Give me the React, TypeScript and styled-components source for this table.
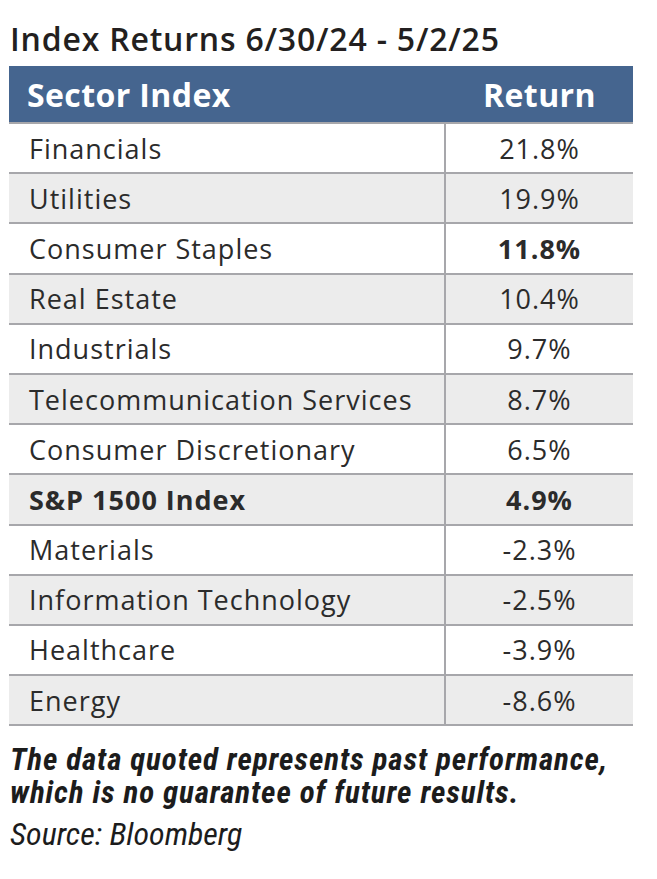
import React from "react";
import styled, { createGlobalStyle } from "styled-components";

const Global = createGlobalStyle`
  html, body { margin: 0; padding: 0; background: #ffffff; }
  body { font-family: "Open Sans", "Noto Sans", sans-serif; }
`;

const Page = styled.div`
  width: 657px;
  padding: 19px 24px 0 9px;
  box-sizing: border-box;
`;

const Title = styled.h1`
  margin: 0 0 8px 1px;
  font-size: 32px;
  font-weight: 600;
  line-height: 39px;
  color: #231f20;
  letter-spacing: 0.8px;
`;

const Table = styled.div`
  width: 624px;
  display: flex;
  flex-direction: column;
`;

const HeaderRow = styled.div`
  display: grid;
  grid-template-columns: 437px 1fr;
  height: 56px;
  align-items: center;
  background: #45658f;
  border-bottom: 2px solid #a7a7ab;
`;

const HeaderCell = styled.div<{ $center?: boolean }>`
  color: #ffffff;
  font-size: 32px;
  font-weight: 700;
  letter-spacing: 0.4px;
  padding-left: ${(p) => (p.$center ? "0" : "18px")};
  text-align: ${(p) => (p.$center ? "center" : "left")};
`;

const Row = styled.div<{ $shaded: boolean }>`
  display: grid;
  grid-template-columns: 437px 1fr;
  height: 50.2px;
  box-sizing: border-box;
  background: ${(p) => (p.$shaded ? "#ececec" : "#ffffff")};
  border-bottom: 2px solid #a7a7ab;
`;

const Cell = styled.div<{ $center?: boolean; $bold?: boolean }>`
  display: flex;
  align-items: center;
  justify-content: ${(p) => (p.$center ? "center" : "flex-start")};
  padding-left: ${(p) => (p.$center ? "0" : "20px")};
  font-size: 27px;
  letter-spacing: 1px;
  font-weight: ${(p) => (p.$bold ? 700 : 400)};
  color: #2b2b2b;
  border-right: ${(p) => (p.$center ? "none" : "2px solid #a7a7ab")};
`;

const Disclaimer = styled.div`
  margin: 17px 0 0 1px;
  display: flex;
  flex-direction: column;
  font-family: "Liberation Sans Narrow", "Roboto Condensed", "Roboto", sans-serif;
  font-style: italic;
  font-weight: 700;
  font-size: 31px;
  letter-spacing: 0.9px;
  line-height: 33px;
  color: #1c1c1c;
`;

const DisclaimerLine = styled.span`
  display: block;
  height: 33px;
`;

const Source = styled.p`
  margin: 7px 0 0 1px;
  font-family: "Liberation Sans Narrow", "Roboto Condensed", "Roboto", sans-serif;
  font-style: italic;
  font-weight: 400;
  font-size: 32px;
  line-height: 36px;
  color: #1c1c1c;
`;

const rows: { name: string; value: string; boldValue?: boolean; boldName?: boolean }[] = [
  { name: "Financials", value: "21.8%" },
  { name: "Utilities", value: "19.9%" },
  { name: "Consumer Staples", value: "11.8%", boldValue: true },
  { name: "Real Estate", value: "10.4%" },
  { name: "Industrials", value: "9.7%" },
  { name: "Telecommunication Services", value: "8.7%" },
  { name: "Consumer Discretionary", value: "6.5%" },
  { name: "S&P 1500 Index", value: "4.9%", boldValue: true, boldName: true },
  { name: "Materials", value: "-2.3%" },
  { name: "Information Technology", value: "-2.5%" },
  { name: "Healthcare", value: "-3.9%" },
  { name: "Energy", value: "-8.6%" },
];

export default function App() {
  return (
    <>
      <Global />
      <Page>
        <Title>Index Returns 6/30/24 - 5/2/25</Title>
        <Table>
          <HeaderRow>
            <HeaderCell>Sector Index</HeaderCell>
            <HeaderCell $center>Return</HeaderCell>
          </HeaderRow>
          {rows.map((r, i) => (
            <Row key={r.name} $shaded={i % 2 === 1}>
              <Cell $bold={r.boldName}>{r.name}</Cell>
              <Cell $center $bold={r.boldValue}>{r.value}</Cell>
            </Row>
          ))}
        </Table>
        <Disclaimer>
          <DisclaimerLine>The data quoted represents past performance,</DisclaimerLine>
          <DisclaimerLine>which is no guarantee of future results.</DisclaimerLine>
        </Disclaimer>
        <Source>Source: Bloomberg</Source>
      </Page>
    </>
  );
}
